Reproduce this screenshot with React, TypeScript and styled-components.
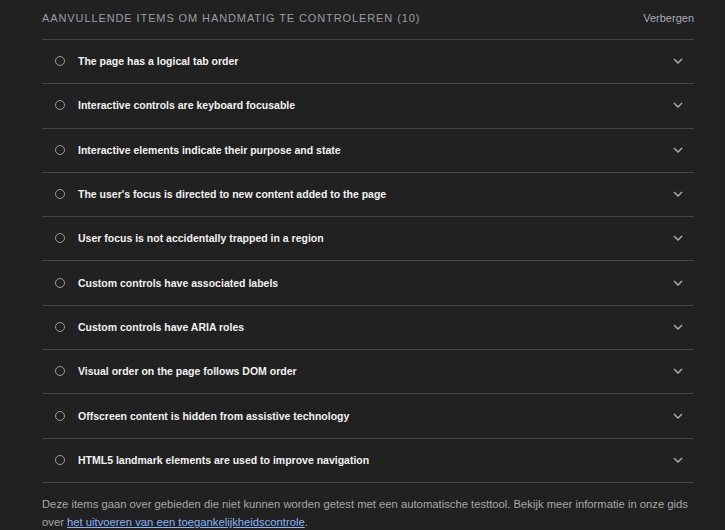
import React from "react";
import styled, { createGlobalStyle } from "styled-components";

const Global = createGlobalStyle`
  html, body { margin: 0; padding: 0; background: #212121; }
  body { font-family: "Liberation Sans", Arial, sans-serif; }
`;

const Page = styled.div`
  padding: 0 31px 0 42px;
  background: #212121;
  min-height: 530px;
`;

const Header = styled.div`
  display: flex;
  align-items: center;
  justify-content: space-between;
  height: 39px;
  border-bottom: 1px solid #474747;
`;

const HeaderTitle = styled.div`
  font-size: 11px;
  letter-spacing: 0.9px;
  color: #9a9ea4;
  text-transform: uppercase;
  margin-top: -3px;
`;

const HideButton = styled.span`
  font-size: 11px;
  color: #a4acb8;
  margin-top: -3px;
`;

const List = styled.div`
  display: flex;
  flex-direction: column;
`;

const Row = styled.div`
  display: flex;
  align-items: center;
  height: 43.3px;
  border-bottom: 1px solid #474747;
  padding: 0 11px 1px 13px;
  box-sizing: border-box;
  height: 44.3px;
`;

const Circle = styled.span`
  width: 8px;
  height: 8px;
  border: 1.5px solid #9c9c9c;
  border-radius: 50%;
  flex: none;
  margin-right: 13px;
`;

const Title = styled.span`
  flex: 1;
  font-size: 10.5px;
  font-weight: bold;
  color: #f2f2f2;
`;

const Chevron = styled.svg`
  width: 10px;
  height: 6px;
  flex: none;
`;

const Footer = styled.p`
  margin: 0;
  padding-top: 12px;
  font-size: 11.25px;
  line-height: 18px;
  color: #a7a7a7;
`;

const Link = styled.a`
  color: #8ab4f8;
  text-decoration: underline;
`;

const items = [
  "The page has a logical tab order",
  "Interactive controls are keyboard focusable",
  "Interactive elements indicate their purpose and state",
  "The user's focus is directed to new content added to the page",
  "User focus is not accidentally trapped in a region",
  "Custom controls have associated labels",
  "Custom controls have ARIA roles",
  "Visual order on the page follows DOM order",
  "Offscreen content is hidden from assistive technology",
  "HTML5 landmark elements are used to improve navigation",
];

export default function App() {
  return (
    <>
      <Global />
      <Page>
        <Header>
          <HeaderTitle>Aanvullende items om handmatig te controleren (10)</HeaderTitle>
          <HideButton>Verbergen</HideButton>
        </Header>
        <List>
          {items.map((t) => (
            <Row key={t}>
              <Circle />
              <Title>{t}</Title>
              <Chevron viewBox="0 0 10 6">
                <path d="M1 1 L5 5 L9 1" fill="none" stroke="#b0b0b0" strokeWidth="1.4" />
              </Chevron>
            </Row>
          ))}
        </List>
        <Footer>
          Deze items gaan over gebieden die niet kunnen worden getest met een automatische testtool. Bekijk meer informatie in onze gids over{" "}
          <Link href="#">het uitvoeren van een toegankelijkheidscontrole</Link>.
        </Footer>
      </Page>
    </>
  );
}
